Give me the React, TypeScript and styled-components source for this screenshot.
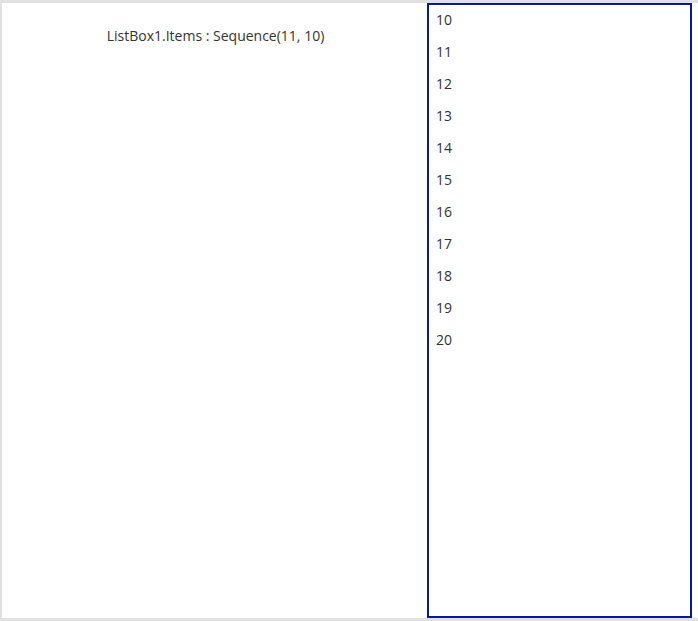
import React from 'react';
import styled, { createGlobalStyle } from 'styled-components';

const GlobalStyle = createGlobalStyle`
  html, body {
    margin: 0;
    padding: 0;
    background: #ffffff;
  }
  body {
    font-family: 'Open Sans', 'Noto Sans', sans-serif;
  }
`;

const Screen = styled.div`
  width: 698px;
  height: 621px;
  box-sizing: border-box;
  border-top: 3px solid #e1e1e1;
  border-left: 2px solid #e1e1e1;
  border-bottom: 3px solid #e1e1e1;
  display: flex;
  background: #fff;
`;

const LabelArea = styled.div`
  width: 425px;
  display: flex;
  justify-content: center;
  padding-top: 23px;
  box-sizing: border-box;
`;

const Label = styled.span`
  font-size: 14px;
  color: #333;
  line-height: 19px;
  height: 19px;
  margin-left: 2px;
`;

const ListBox = styled.ul`
  list-style: none;
  margin: 0;
  width: 265px;
  box-sizing: border-box;
  border: 2px solid #0b1a8c;
  padding: 2px 0 0 7px;
`;

const Item = styled.li`
  height: 32px;
  line-height: 26px;
  font-size: 14px;
  color: #333;
`;

const items = Array.from({ length: 11 }, (_, i) => i + 10);

export default function App() {
  return (
    <>
      <GlobalStyle />
      <Screen>
        <LabelArea>
          <Label>ListBox1.Items : Sequence(11, 10)</Label>
        </LabelArea>
        <ListBox>
          {items.map((n) => (
            <Item key={n}>{n}</Item>
          ))}
        </ListBox>
      </Screen>
    </>
  );
}
